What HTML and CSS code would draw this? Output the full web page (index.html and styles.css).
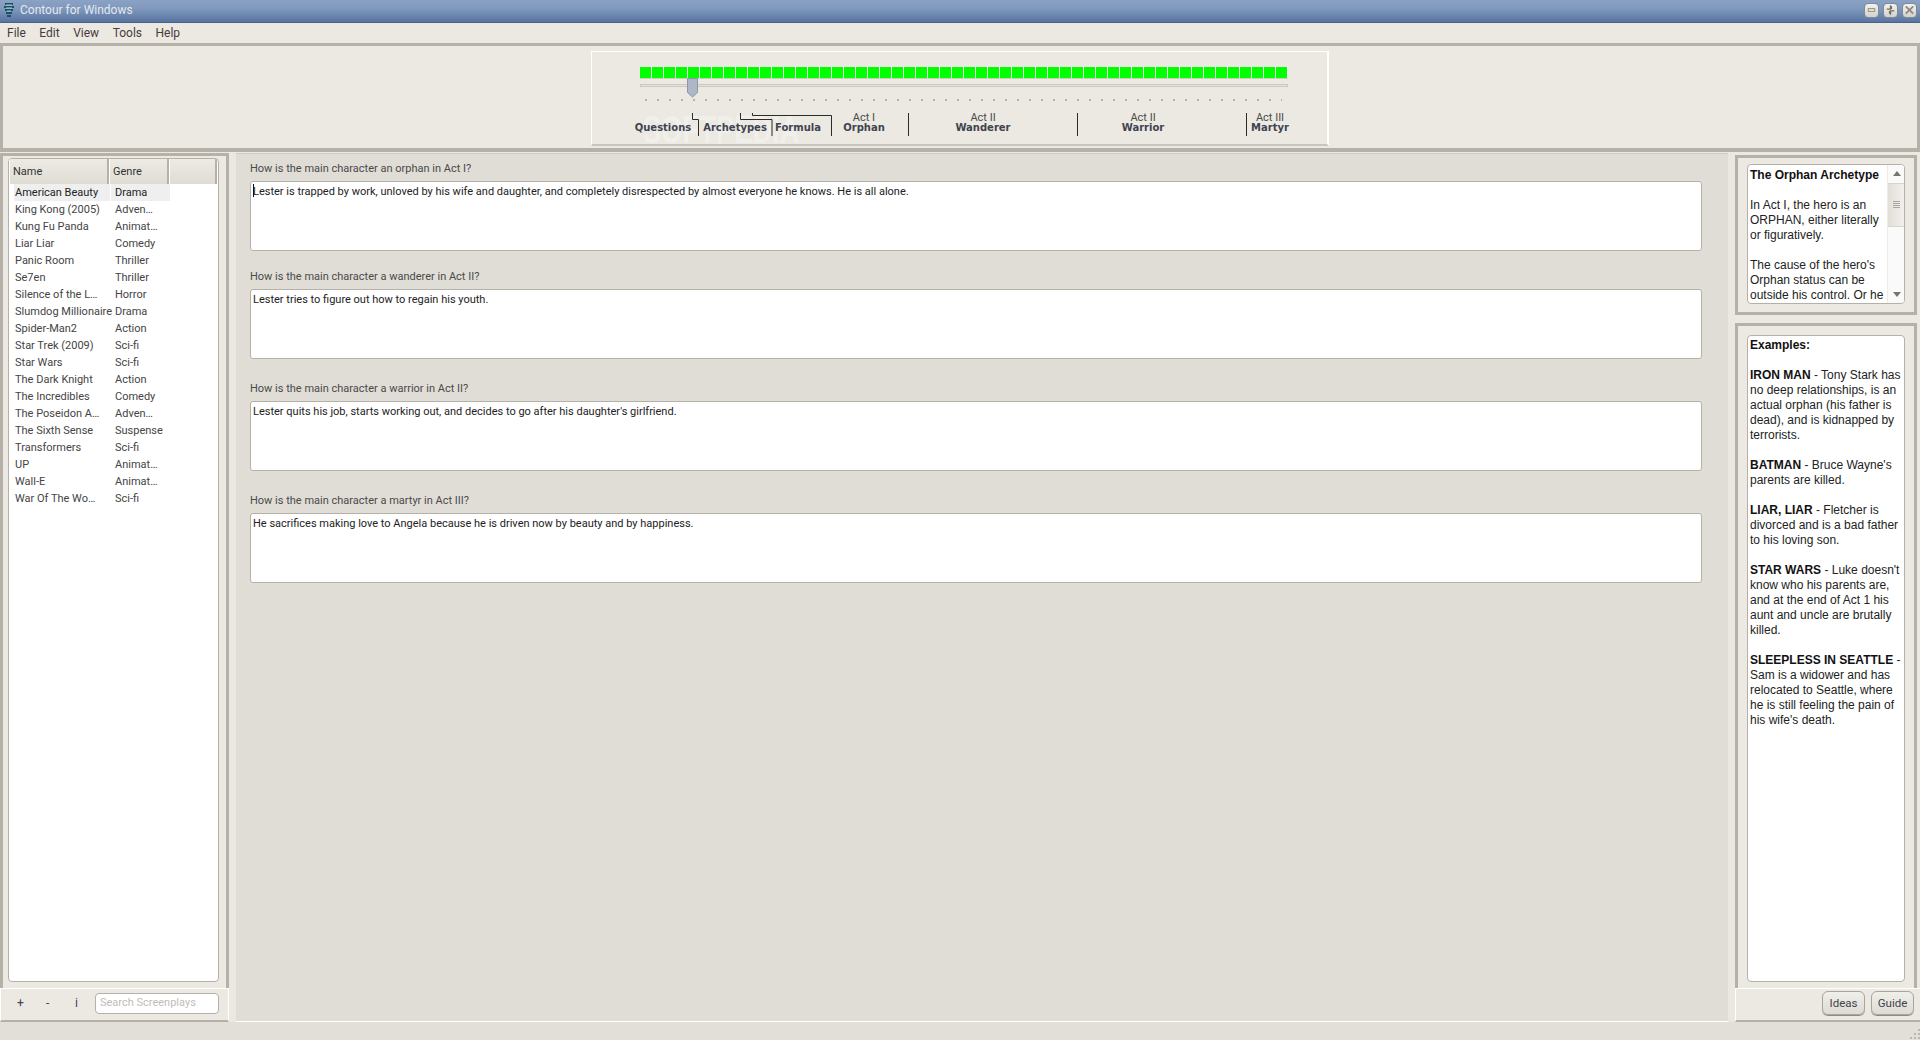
FILE: index.html
```html
<!DOCTYPE html>
<html lang="en">
<head>
<meta charset="utf-8">
<title>Contour for Windows</title>
<link rel="stylesheet" href="styles.css">
</head>
<body>
<div class="app">
  <header class="titlebar">
    <svg class="appicon" width="12" height="16" viewBox="0 0 12 16"><path d="M2 2h8M1 5h10M2 8h8M3 11h6M4 14h4" stroke="#1d4f63" stroke-width="2" fill="none"/><path d="M3 3h6M3 6h6M4 9h4" stroke="#9fd0dc" stroke-width="1" fill="none"/></svg>
    <span class="title">Contour for Windows</span>
    <div class="winbtns">
      <span class="winbtn"><svg width="14" height="14" viewBox="0 0 14 14"><rect x="3.5" y="5.5" width="7" height="3" fill="none" stroke="#8d8b84"/></svg></span>
      <span class="winbtn"><svg width="14" height="14" viewBox="0 0 14 14"><path d="M7 2v4H3M7 12V8h4M8 3v3M6 8v3" fill="none" stroke="#6f6d67" stroke-width="1.4"/></svg></span>
      <span class="winbtn"><svg width="14" height="14" viewBox="0 0 14 14"><path d="M3 3l8 8M11 3l-8 8" fill="none" stroke="#8d8b84" stroke-width="2"/></svg></span>
    </div>
  </header>
  <nav class="menubar">
    <span class="menuitem">File</span><span class="menuitem">Edit</span><span class="menuitem">View</span><span class="menuitem">Tools</span><span class="menuitem">Help</span>
  </nav>
  <section class="toppanel">
    <div class="timeline">
      <div class="watermark">SOFTPEDIA</div>
      <div class="slider">
        <div class="squares"></div>
        <div class="track"></div>
        <div class="dots"></div>
        <svg class="thumb" width="12" height="20" viewBox="0 0 12 20"><path d="M.5.5h10v14l-5 4.5-5-4.5z" fill="#aeb7c7" stroke="#8f97a6"/></svg>
      </div>
      <div class="labels">
        <div class="lab w72 solo"><b>Questions</b></div>
        <div class="lab w72 solo"><b>Archetypes</b></div>
        <div class="lab w54 solo"><b>Formula</b></div>
        <div class="lab w78"><span>Act I</span><b>Orphan</b></div>
        <div class="lab w160"><span>Act II</span><b>Wanderer</b></div>
        <div class="lab w160"><span>Act II</span><b>Warrior</b></div>
        <div class="lab w94"><span>Act III</span><b>Martyr</b></div>
      </div>
      <svg class="brackets" width="736" height="40" viewBox="0 0 736 40">
        <path d="M100.5 0v6.5h6V23M148.5 0v6.5h31.5V23M160.5 0v2.5h79V23M316.5 0V23M485.5 0V23M654.5 0V23" fill="none" stroke="#2b2b2b"/>
      </svg>
    </div>
  </section>
  <main class="main">
    <aside class="left">
      <div class="leftpanel">
        <div class="list">
          <div class="thead"><div class="th cname">Name</div><div class="th cgenre">Genre</div><div class="th cfill"></div></div>
          <div class="row sel"><div class="cell name">American Beauty</div><div class="cell genre">Drama</div></div>
          <div class="row"><div class="cell name">King Kong (2005)</div><div class="cell genre">Adven…</div></div>
          <div class="row"><div class="cell name">Kung Fu Panda</div><div class="cell genre">Animat…</div></div>
          <div class="row"><div class="cell name">Liar Liar</div><div class="cell genre">Comedy</div></div>
          <div class="row"><div class="cell name">Panic Room</div><div class="cell genre">Thriller</div></div>
          <div class="row"><div class="cell name">Se7en</div><div class="cell genre">Thriller</div></div>
          <div class="row"><div class="cell name">Silence of the L…</div><div class="cell genre">Horror</div></div>
          <div class="row"><div class="cell name">Slumdog Millionaire</div><div class="cell genre">Drama</div></div>
          <div class="row"><div class="cell name">Spider-Man2</div><div class="cell genre">Action</div></div>
          <div class="row"><div class="cell name">Star Trek (2009)</div><div class="cell genre">Sci-fi</div></div>
          <div class="row"><div class="cell name">Star Wars</div><div class="cell genre">Sci-fi</div></div>
          <div class="row"><div class="cell name">The Dark Knight</div><div class="cell genre">Action</div></div>
          <div class="row"><div class="cell name">The Incredibles</div><div class="cell genre">Comedy</div></div>
          <div class="row"><div class="cell name">The Poseidon A…</div><div class="cell genre">Adven…</div></div>
          <div class="row"><div class="cell name">The Sixth Sense</div><div class="cell genre">Suspense</div></div>
          <div class="row"><div class="cell name">Transformers</div><div class="cell genre">Sci-fi</div></div>
          <div class="row"><div class="cell name">UP</div><div class="cell genre">Animat…</div></div>
          <div class="row"><div class="cell name">Wall-E</div><div class="cell genre">Animat…</div></div>
          <div class="row"><div class="cell name">War Of The Wo…</div><div class="cell genre">Sci-fi</div></div>
        </div>
      </div>
      <div class="leftfoot">
        <span class="tool">+</span><span class="tool">-</span><span class="tool last">i</span>
        <div class="search">Search Screenplays</div>
      </div>
    </aside>
    <section class="center">
      <div class="qa">
        <div class="q">How is the main character an orphan in Act I?</div>
        <div class="answer"><i class="caret"></i>Lester is trapped by work, unloved by his wife and daughter, and completely disrespected by almost everyone he knows. He is all alone.</div>
      </div>
      <div class="qa q2">
        <div class="q">How is the main character a wanderer in Act II?</div>
        <div class="answer">Lester tries to figure out how to regain his youth.</div>
      </div>
      <div class="qa q3">
        <div class="q">How is the main character a warrior in Act II?</div>
        <div class="answer">Lester quits his job, starts working out, and decides to go after his daughter's girlfriend.</div>
      </div>
      <div class="qa q3">
        <div class="q">How is the main character a martyr in Act III?</div>
        <div class="answer">He sacrifices making love to Angela because he is driven now by beauty and by happiness.</div>
      </div>
    </section>
    <aside class="right">
      <div class="rpanel rtop">
        <div class="rbox topbox">
          <div class="rtext clip"><b>The Orphan Archetype</b><br><br>In Act I, the hero is an<br>ORPHAN, either literally<br>or figuratively.<br><br>The cause of the hero's<br>Orphan status can be<br>outside his control. Or he</div>
          <div class="scroll">
            <svg class="arrow" width="17" height="18" viewBox="0 0 17 18"><path d="M5 11h8l-4-5z" fill="#77756f"/></svg>
            <div class="scrollthumb"><svg width="7" height="8" viewBox="0 0 7 8"><path d="M0 .5h7M0 2.5h7M0 4.5h7M0 6.5h7" stroke="#a9a69e"/></svg></div>
            <div class="scrollrest"></div>
            <svg class="arrow" width="17" height="18" viewBox="0 0 17 18"><path d="M5 7h8l-4 5z" fill="#77756f"/></svg>
          </div>
        </div>
      </div>
      <div class="rpanel rbot">
        <div class="rbox botbox">
          <div class="rtext"><b>Examples:</b><br><br><b>IRON MAN</b> - Tony Stark has<br>no deep relationships, is an<br>actual orphan (his father is<br>dead), and is kidnapped by<br>terrorists.<br><br><b>BATMAN</b> - Bruce Wayne's<br>parents are killed.<br><br><b>LIAR, LIAR</b> - Fletcher is<br>divorced and is a bad father<br>to his loving son.<br><br><b>STAR WARS</b> - Luke doesn't<br>know who his parents are,<br>and at the end of Act 1 his<br>aunt and uncle are brutally<br>killed.<br><br><b>SLEEPLESS IN SEATTLE</b> -<br>Sam is a widower and has<br>relocated to Seattle, where<br>he is still feeling the pain of<br>his wife's death.</div>
        </div>
      </div>
      <div class="rfoot"><span class="btn">Ideas</span><span class="btn">Guide</span></div>
    </aside>
  </main>
  <footer class="status">
    <svg width="12" height="12" viewBox="0 0 12 12"><path d="M10 1h2v2h-2zM6 5h2v2H6zM10 5h2v2h-2zM2 9h2v2H2zM6 9h2v2H6zM10 9h2v2h-2z" fill="#b9b6ae"/></svg>
  </footer>
</div>
</body>
</html>
```

FILE: styles.css
```css
* { box-sizing: border-box; }
html, body { margin: 0; height: 100%; overflow: hidden; }
body { font-family: Roboto, "Noto Sans", sans-serif; font-size: 11px; color: #3a3a3a; background: #ece9e2; }
.app { width: 1920px; height: 1040px; display: flex; flex-direction: column; }

.titlebar { height: 23px; flex: none; display: flex; align-items: center; padding: 0 3px 2px; background: linear-gradient(#8aa2c4, #7f98bd 40%, #58749f); border-bottom: 1px solid #49628a; }
.appicon { flex: none; margin-right: 5px; }
.title { color: #e4e8ee; font-size: 12px; }
.winbtns { margin-left: auto; display: flex; gap: 4px; }
.winbtn { width: 15px; height: 15px; border: 1px solid #7c8aa0; border-radius: 4px; background: linear-gradient(#f4f2ec, #d4d1c8); display: flex; align-items: center; justify-content: center; }

.menubar { height: 20px; flex: none; display: flex; align-items: center; padding-left: 7px; gap: 13.5px; background: #ece9e2; font-size: 12px; color: #4a3a3a; }

.toppanel { height: 109px; flex: none; border: 3px solid #b5b1a8; border-bottom-width: 4px; background: #ece9e2; display: flex; justify-content: center; margin-bottom: 1px; }
.timeline { position: relative; width: 738px; height: 95px; margin-top: 5px; border: 1px solid #fff; border-right-width: 2px; border-bottom: 2px solid #c9c5bc; padding-top: 15px; }
.slider { position: relative; width: 648px; margin-left: 48px; }
.squares { height: 11px; background: repeating-linear-gradient(90deg, #00ff00 0 11px, #f4f2ec 11px 12px); box-shadow: 0 1px 0 #cfccc4; }
.track { height: 3px; margin-top: 6px; background: #e6e3dc; border: 1px solid #cbc8c0; }
.dots { height: 2px; margin: 12px 6px 0 5px; background: repeating-linear-gradient(90deg, #b4b2ac 0 2px, transparent 2px 12px); }
.thumb { position: absolute; left: 47px; top: 11px; }
.labels { position: relative; display: flex; margin-top: 12px; margin-left: 35px; height: 20px; line-height: 10px; }
.lab { display: flex; flex-direction: column; align-items: center; justify-content: flex-end; flex: none; font-size: 11px; color: #4a4a4a; }
.lab b { color: #3e4450; font-family: "DejaVu Sans", sans-serif; font-size: 10px; }
.w72 { width: 72px; } .w54 { width: 54px; } .w78 { width: 78px; } .w160 { width: 160px; } .w94 { width: 94px; }
.brackets { position: absolute; left: 0; top: 61px; }
.watermark { position: absolute; left: 51px; top: 57px; font: bold 38px "Liberation Sans", sans-serif; color: #f1efea; white-space: nowrap; transform: scaleX(.72); transform-origin: left top; }

.main { flex: 1; display: flex; min-height: 0; }
.left { width: 229px; flex: none; display: flex; flex-direction: column; }
.leftpanel { flex: 1; border: 3px solid #b5b1a8; border-bottom: 0; padding: 2px 7px 6px 5px; background: #ece9e2; min-height: 0; }
.list { height: 100%; background: #fff; border: 1px solid #b5b1a8; border-radius: 4px; overflow: hidden; }
.thead { display: flex; height: 25px; }
.th { background: linear-gradient(#eeebe5, #dfdcd4); border-right: 2px solid #b5b1a8; border-left: 1px solid #fff; padding: 6px 0 0 3px; color: #333; font-size: 11px; }
.cname { width: 100px; }
.cgenre { width: 60px; }
.cfill { width: 48px; }
.row { display: flex; height: 17px; line-height: 17px; color: #444; }
.cell { white-space: nowrap; }
.name { width: 100px; padding-left: 5px; margin-left: 1px; }
.genre { width: 59px; padding-left: 4px; margin-left: 1px; }
.row.sel .cell { background: #efefef; color: #222; }
.row.sel .name { margin-left: 5px; width: 96px; padding-left: 1px; }

.leftfoot { height: 34px; flex: none; display: flex; align-items: center; background: #ece9e2; border-top: 1px solid #fff; border-left: 1px solid #fff; border-bottom: 2px solid #b5b1a8; border-right: 1px solid #fff; padding: 0 0 3px 16px; }
.tool { width: 29px; font-size: 12px; color: #3f4460; }
.tool.last { width: 10px; }
.search { margin-left: 10px; width: 124px; height: 21px; background: #fff; border: 1px solid #b5b1a8; border-radius: 4px; color: #c0bdb8; padding: 2px 4px; }

.center { flex: 1; margin: 0 7px; background: #e0ddd6; border-top: 1px solid #cfccc4; border-bottom: 1px solid #fff; padding: 6px 26px 0 14px; height: 869px; box-shadow: -7px 0 0 #ebe8e1, 7px 0 0 #ebe8e1; }
.q2 { margin-top: 17px; }
.q3 { margin-top: 21px; }
.q { height: 20px; line-height: 18px; color: #4a4a4a; }
.answer { position: relative; height: 70px; background: #fff; border: 1px solid #b5b1a8; border-radius: 3px; padding: 3px 2px; color: #222; line-height: 14px; margin-top: 1px; }
.caret { position: absolute; left: 2px; top: 2px; width: 1px; height: 13px; background: #111; }

.right { width: 185px; flex: none; display: flex; flex-direction: column; }
.rpanel { border: 3px solid #b5b1a8; background: #ece9e2; margin-right: 3px; }
.rtop { height: 160px; padding: 6px 9px 8px 9px; margin-bottom: 8px; margin-top: 2px; flex: none; }
.rbot { flex: 1; border-bottom: 0; padding: 9px 9px 6px 9px; min-height: 0; }
.rbox { height: 100%; background: #fff; border: 1px solid #b5b1a8; border-radius: 4px; display: flex; overflow: hidden; }
.rtext { flex: 1; font: 12px/15px "Liberation Sans", sans-serif; color: #222; padding: 2px 2px 0 2px; white-space: nowrap; }
.rtext b { color: #111; }
.rtext.clip { overflow: hidden; height: 138px; padding-top: 3px; }
.scroll { width: 17px; flex: none; display: flex; flex-direction: column; background: #fbfafa; border-left: 1px solid #eeece8; }
.arrow { flex: none; }
.scrollthumb { height: 44px; flex: none; display: flex; align-items: center; justify-content: center; background: linear-gradient(90deg, #e2dfd8, #f2f0ec); border-top: 1px solid #d8d5ce; border-bottom: 1px solid #d8d5ce; }
.scrollrest { flex: 1; }
.rfoot { height: 34px; flex: none; display: flex; align-items: center; justify-content: flex-end; gap: 6px; padding: 0 6px 3px 0; background: #ece9e2; border-top: 1px solid #fff; border-left: 1px solid #fff; border-bottom: 2px solid #b5b1a8; }
.btn { width: 43px; height: 24px; line-height: 22px; text-align: center; border: 1px solid #a8a59d; border-radius: 6px; background: linear-gradient(#f1efe9, #dedbd3); color: #3d4350; font-size: 11.5px; box-shadow: 0 1px 0 #8f8c85; }

.status { height: 18px; flex: none; background: #e2dfd8; display: flex; justify-content: flex-end; align-items: flex-end; }
```
